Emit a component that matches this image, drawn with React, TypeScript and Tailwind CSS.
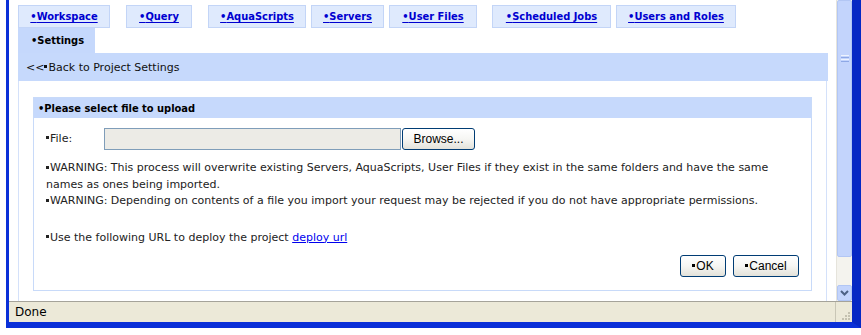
import React from "react";

const thin = { fontFamily: '"DejaVu Sans", sans-serif' } as const;
const cond = { fontFamily: '"DejaVu Sans Condensed", "DejaVu Sans", sans-serif' } as const;

const tabs: { label: string; w: string; ml: string }[] = [
  { label: "Workspace", w: "w-[92px]", ml: "ml-0" },
  { label: "Query", w: "w-[66px]", ml: "ml-[16px]" },
  { label: "AquaScripts", w: "w-[98px]", ml: "ml-[16px]" },
  { label: "Servers", w: "w-[73px]", ml: "ml-[5px]" },
  { label: "User Files", w: "w-[88px]", ml: "ml-[5px]" },
  { label: "Scheduled Jobs", w: "w-[119px]", ml: "ml-[15px]" },
  { label: "Users and Roles", w: "w-[120px]", ml: "ml-[5px]" },
];

function Sq() {
  return <span className="inline-block w-[3px] h-[3px] bg-current align-middle mr-[1px] mb-[2px]" />;
}

function XPButton({ children, className }: { children: React.ReactNode; className: string }) {
  return (
    <div
      className={`flex items-center justify-center rounded-[3px] border border-[#003c74] bg-gradient-to-b from-white via-[#f6f6f3] to-[#e3e2da] text-[12px] text-black ${className}`}
      style={{ fontFamily: '"Liberation Sans", Arial, sans-serif' }}
    >
      {children}
    </div>
  );
}

export default function App() {
  return (
    <div className="w-[861px] h-[335px] bg-white pl-[6px] pb-[7px] overflow-hidden">
      <div className="h-full flex flex-col border-l-[3px] border-r-[9px] border-b-[6px] border-[#0a30d8] border-r-[#0628c4]">
        {/* content row */}
        <div className="flex flex-1 min-h-0">
          {/* page */}
          <div className="flex-1 bg-white pl-[9px] pr-[8px] pt-[5px] border-r border-[#e6e4dc]">
            {/* tab row 1 */}
            <div className="flex h-[23px]">
              {tabs.map((t) => (
                <div
                  key={t.label}
                  className={`${t.w} ${t.ml} h-[23px] flex items-center justify-center bg-[#dfeafd] border border-[#c3d5f7]`}
                >
                  <span
                    className="text-[11px] font-bold text-[#0000d0] underline underline-offset-[2px] leading-none whitespace-nowrap"
                    style={cond}
                  >
                    •{t.label}
                  </span>
                </div>
              ))}
            </div>
            {/* settings tab */}
            <div className="w-[77px] h-[25px] bg-[#c5d8fc] flex items-center pl-[13px]">
              <span className="text-[11px] font-bold text-black leading-none" style={cond}>
                •Settings
              </span>
            </div>
            {/* back bar */}
            <div className="h-[28px] bg-[#c6d9fc] flex items-center pl-[8px]">
              <span className="text-[11px] text-[#111] leading-none" style={thin}>
                &lt;&lt;<Sq />Back to Project Settings
              </span>
            </div>
            {/* panel */}
            <div className="border-l border-r border-[#d4e1fa] pt-[16px] pl-[14px] pr-[14px] h-[240px] mr-[1px]">
              <div className="border border-[#c8daf9] h-[194px] flex flex-col">
                <div className="h-[20px] bg-[#c6d9fc] flex items-center pl-[4px]">
                  <span className="text-[11px] font-bold text-black leading-none" style={cond}>
                    •Please select file to upload
                  </span>
                </div>
                <div className="pl-[12px] pr-[12px] text-[11px] text-[#222]" style={thin}>
                  <div className="flex items-center mt-[10px] h-[22px]">
                    <span className="w-[58px]"><Sq />File:</span>
                    <div className="w-[297px] h-[22px] bg-[#ecebe6] border border-[#7f9db9]" />
                    <XPButton className="w-[73px] h-[22px] ml-[1px]">Browse...</XPButton>
                  </div>
                  <div className="mt-[10px] leading-[16.5px]">
                    <Sq />WARNING: This process will overwrite existing Servers, AquaScripts, User Files if they exist in the same folders and have the same names as ones being imported.
                  </div>
                  <div className="leading-[16.5px]">
                    <Sq />WARNING: Depending on contents of a file you import your request may be rejected if you do not have appropriate permissions.
                  </div>
                  <div className="mt-[20px] leading-[16.5px]">
                    <Sq />Use the following URL to deploy the project{" "}
                    <span className="text-[#0000ee] underline">deploy url</span>
                  </div>
                  <div className="flex justify-end mt-[9px] gap-[7px]">
                    <XPButton className="w-[46px] h-[22px]"><Sq />OK</XPButton>
                    <XPButton className="w-[66px] h-[22px]"><Sq />Cancel</XPButton>
                  </div>
                </div>
              </div>
            </div>
          </div>
          {/* scrollbar */}
          <div className="w-[15px] flex flex-col bg-[#f4f3ee]">
            <div className="h-[257px] bg-[#c3d4fc] border border-[#b2c6f4] rounded-[2px] flex flex-col items-center pt-[54px]">
              <div className="flex flex-col gap-[1px]">
                <div className="w-[8px] h-[1px] bg-[#eef3fe]" />
                <div className="w-[8px] h-[1px] bg-[#8ea8e6]" />
                <div className="w-[8px] h-[1px] bg-[#eef3fe]" />
                <div className="w-[8px] h-[1px] bg-[#8ea8e6]" />
              </div>
            </div>
            <div className="flex-1" />
            <div className="h-[16px] bg-[#c3d4fc] border border-[#b2c6f4] rounded-[2px] flex items-center justify-center">
              <svg width="9" height="6" viewBox="0 0 9 6">
                <path d="M1 1 L4.5 4.5 L8 1" stroke="#4d6185" strokeWidth="2" fill="none" />
              </svg>
            </div>
          </div>
        </div>
        {/* status bar */}
        <div className="h-[21px] bg-[#ece9d8] border-t border-[#a5a39a] flex items-center">
          <div className="flex-1 pl-[6px] text-[12px] text-black" style={thin}>Done</div>
          <div className="w-[17px] h-full border-l border-[#c9c6b6] relative">
            <svg className="absolute right-[1px] bottom-[1px]" width="10" height="10" viewBox="0 0 10 10">
              <rect x="7" y="1" width="2" height="2" fill="#c4c1b0" />
              <rect x="4" y="4" width="2" height="2" fill="#c4c1b0" />
              <rect x="7" y="4" width="2" height="2" fill="#c4c1b0" />
              <rect x="1" y="7" width="2" height="2" fill="#c4c1b0" />
              <rect x="4" y="7" width="2" height="2" fill="#c4c1b0" />
              <rect x="7" y="7" width="2" height="2" fill="#c4c1b0" />
            </svg>
          </div>
        </div>
      </div>
    </div>
  );
}
